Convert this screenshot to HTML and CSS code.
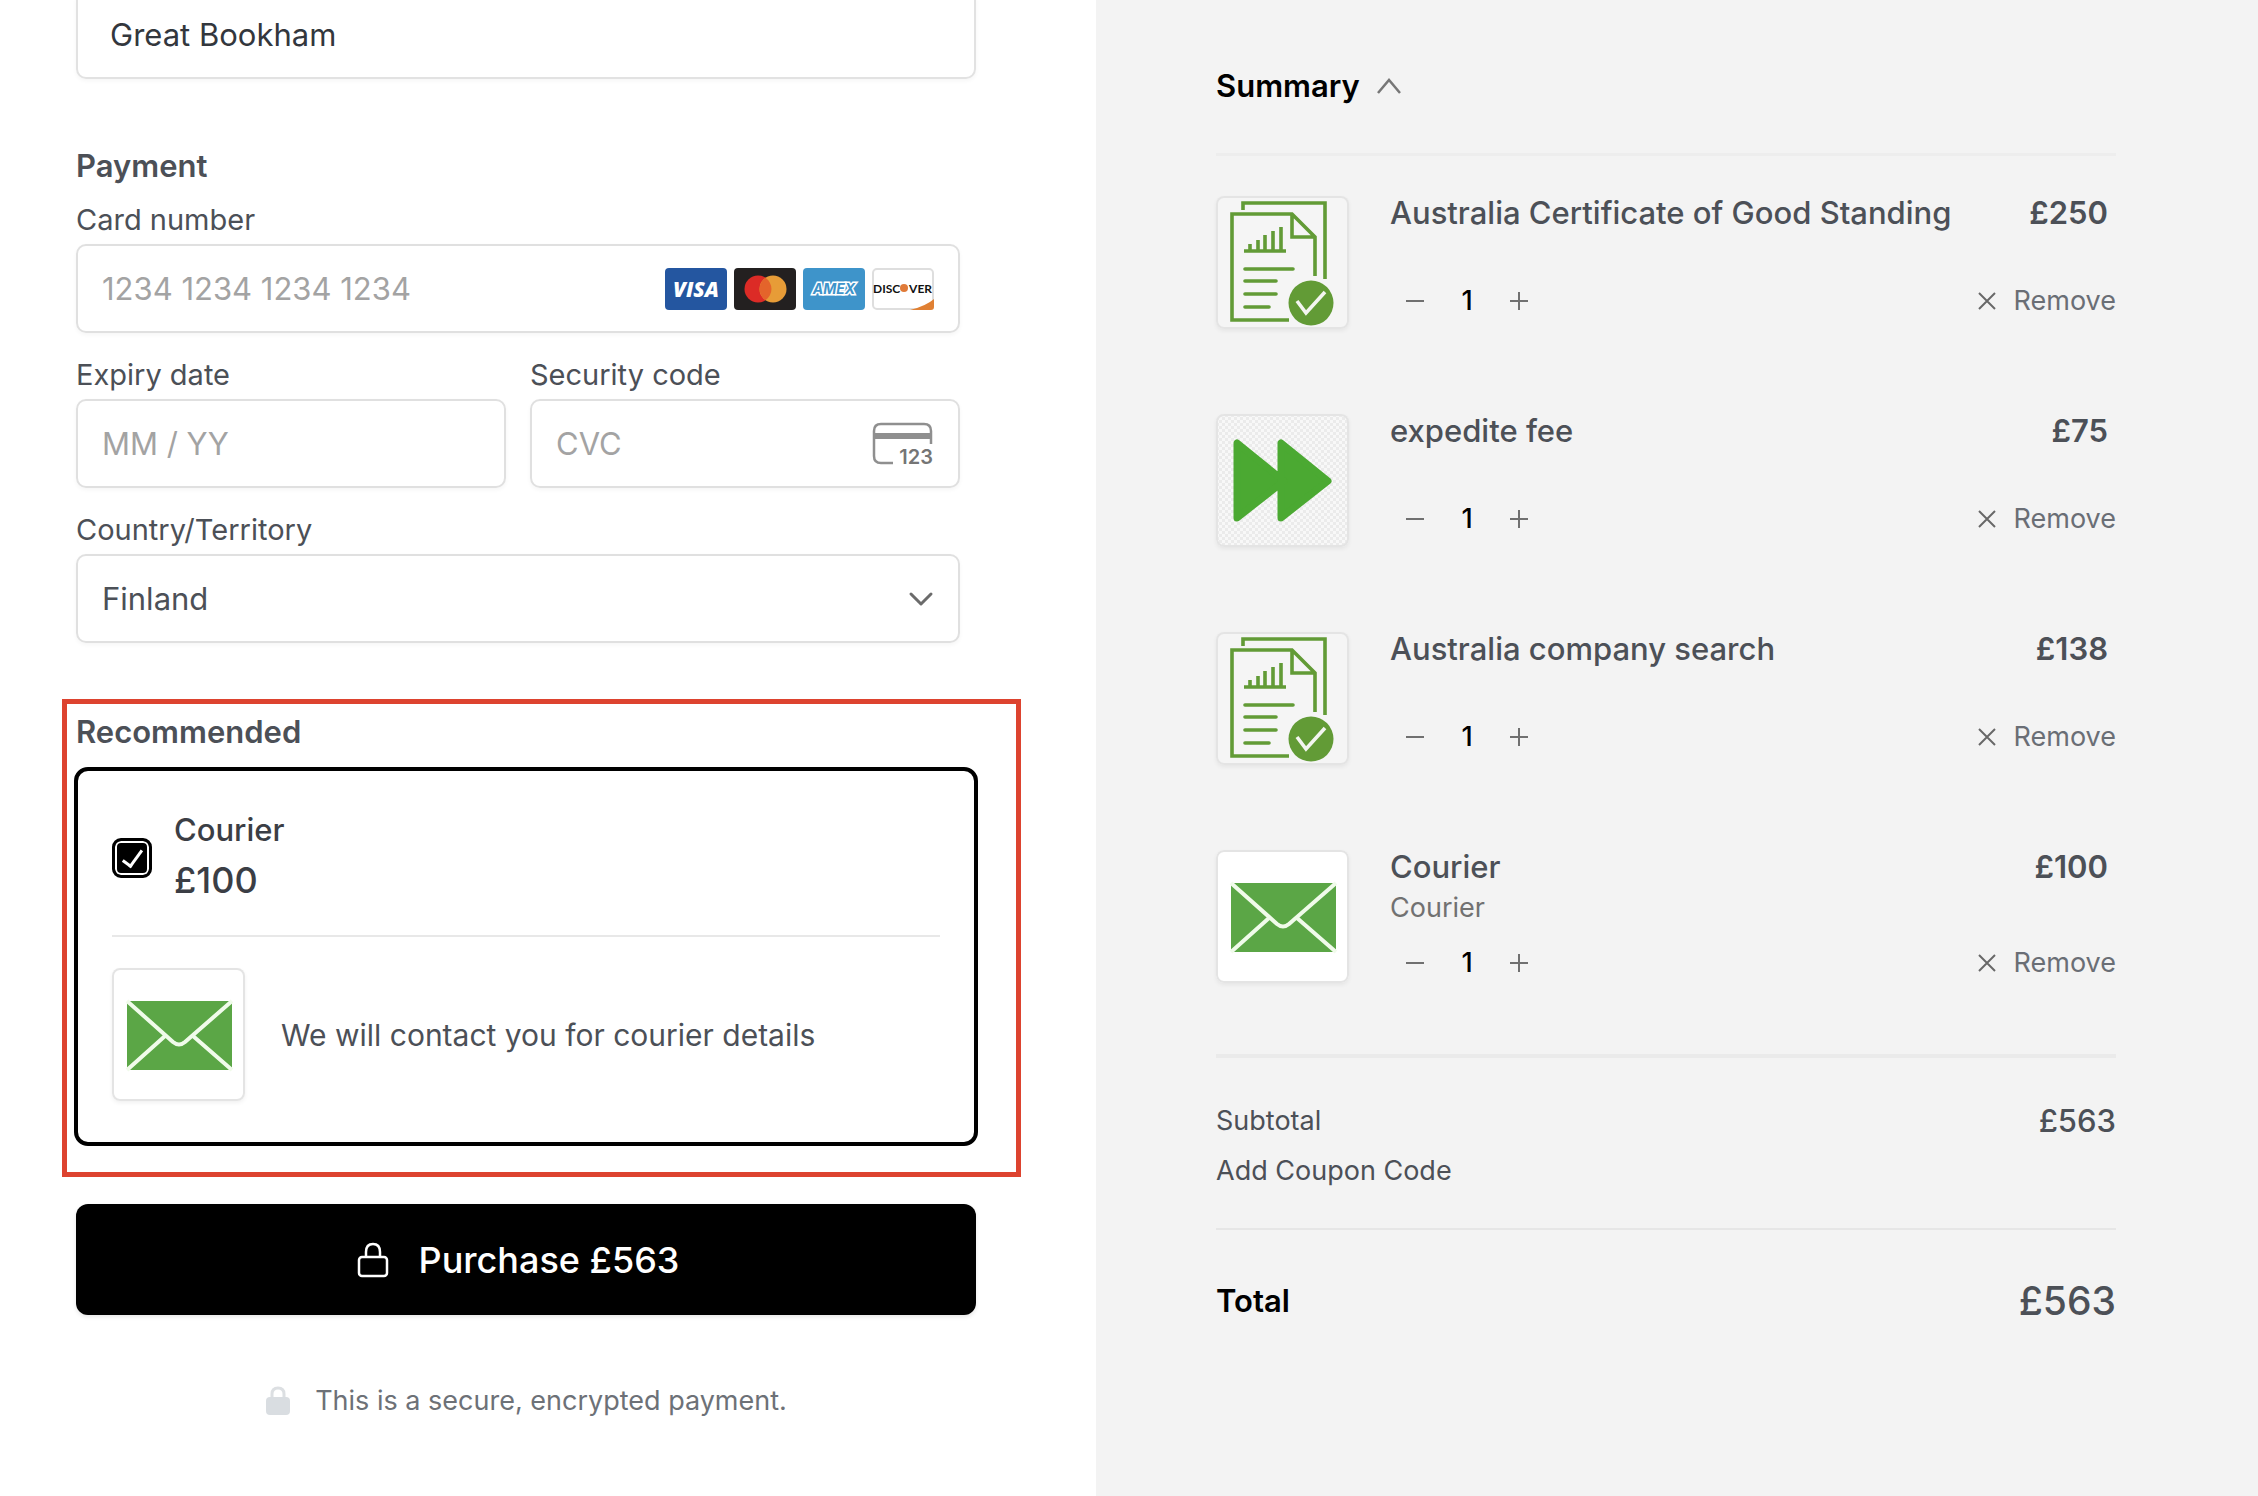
FILE: index.html
```html
<!DOCTYPE html>
<html lang="en">
<head>
    <meta charset="UTF-8">
    <meta name="viewport" content="width=device-width, initial-scale=1.0">
    <title>Checkout</title>
    <link rel="stylesheet" href="styles.css">
</head>
<body>
    <!-- Shared icons -->
    <svg class="sprite" aria-hidden="true">
        <symbol id="icon-envelope" viewBox="0 0 133 133">
            <rect x="15" y="33" width="105" height="69" fill="#5ba646"/>
            <g fill="none" stroke="#f0fbea" stroke-width="4">
                <path d="M15 33 L61 74 Q67 79 73 74 L120 33"/>
                <path d="M53 68 L15 102 M81 68 L120 102"/>
            </g>
        </symbol>
        <symbol id="icon-document" viewBox="0 0 133 133">
            <g fill="none" stroke="#629b36" stroke-width="3.6">
                <path d="M27 14 V7 H109 V83"/>
                <path d="M73 124 H16 V18 H76 L99 41 V80 M76 18 V41 H99"/>
                <path d="M28 55 H70 M34 55 V48 M42 55 V44 M49 55 V39 M57 55 V35 M65 55 V31"/>
                <path stroke-linecap="round" d="M29 73 H77 M29 85 H60 M29 98 H60 M29 111 H53"/>
            </g>
            <circle cx="95" cy="107" r="22.500" fill="#629b36"/>
            <path d="M81 105 L90 117 L109 96" fill="none" stroke="#f3f5f0" stroke-width="3.6"/>
        </symbol>
        <symbol id="icon-forward" viewBox="0 0 133 133">
            <path d="M21 29 V104 L68 67 Z M65 29 V104 L112 67 Z" fill="#4ba932" stroke="#4ba932" stroke-width="7" stroke-linejoin="round"/>
        </symbol>
        <symbol id="icon-minus" viewBox="0 0 18 18">
            <path d="M0 9 H18" stroke="#707070" stroke-width="2"/>
        </symbol>
        <symbol id="icon-plus" viewBox="0 0 18 18">
            <path d="M0 9 H18 M9 0 V18" stroke="#707070" stroke-width="2"/>
        </symbol>
        <symbol id="icon-close" viewBox="0 0 18 18">
            <path d="M1 1 L17 17 M17 1 L1 17" stroke="#686868" stroke-width="2"/>
        </symbol>
    </svg>

    <div class="page">
        <!-- Payment form -->
        <main class="checkout">
            <input class="city" type="text" value="Great Bookham" aria-label="City">

            <section class="payment">
                <h2>Payment</h2>
                <div class="field">
                    <label for="card-number">Card number</label>
                    <div class="control">
                        <input type="text" id="card-number" placeholder="1234 1234 1234 1234">
                        <div class="cards">
                            <svg viewBox="0 0 62 42"><rect width="62" height="42" rx="4" fill="#2456a0"/><text x="31" y="29" text-anchor="middle" class="visa">VISA</text></svg>
                            <svg viewBox="0 0 62 42"><rect width="62" height="42" rx="4" fill="#232020"/><circle cx="24" cy="21" r="13.500" fill="#dc2b26"/><circle cx="39" cy="21" r="13.500" fill="#e79c37"/><path d="M31.500 9.800 a13.500 13.500 0 0 1 0 22.400 a13.500 13.500 0 0 1 0 -22.400" fill="#e4642b"/></svg>
                            <svg viewBox="0 0 62 42"><rect width="62" height="42" rx="4" fill="#3e94ca"/><text x="31" y="26" text-anchor="middle" class="amex">AMEX</text></svg>
                            <svg viewBox="0 0 62 42"><rect x="1" y="1" width="60" height="40" rx="4" fill="#fff" stroke="#dedede" stroke-width="2"/><path d="M38 42 Q54 38 62 31 V39 Q62 42 59 42 Z" fill="#e08033"/><text x="1" y="25" class="discover">DISC</text><circle cx="32" cy="20" r="4" fill="#e07a38"/><text x="60" y="25" text-anchor="end" class="discover">VER</text></svg>
                        </div>
                    </div>
                </div>
                <div class="row">
                    <div class="field">
                        <label for="expiry">Expiry date</label>
                        <div class="control">
                            <input type="text" id="expiry" placeholder="MM / YY">
                        </div>
                    </div>
                    <div class="field">
                        <label for="cvc">Security code</label>
                        <div class="control">
                            <input type="text" id="cvc" placeholder="CVC">
                            <svg class="cvc-icon" viewBox="0 0 62 44">
                                <path d="M21 41 H9 Q2 41 2 34 V9 Q2 2 9 2 H52 Q59 2 59 9 V22" fill="none" stroke="#8f8f8f" stroke-width="2.500"/>
                                <rect x="2" y="11" width="57" height="6" fill="#8f8f8f"/>
                                <text x="61" y="42" text-anchor="end">123</text>
                            </svg>
                        </div>
                    </div>
                </div>
                <div class="field">
                    <label for="country">Country/Territory</label>
                    <div class="control">
                        <select id="country">
                            <option>Finland</option>
                        </select>
                        <svg class="chevron" viewBox="0 0 26 16"><path d="M3 3 L13 13 L23 3" fill="none" stroke="#6b6b6b" stroke-width="3" stroke-linecap="round" stroke-linejoin="round"/></svg>
                    </div>
                </div>
            </section>

            <!-- Recommended add-on -->
            <section class="recommended">
                <h2>Recommended</h2>
                <div class="addon">
                    <label class="addon-head">
                        <input type="checkbox" checked>
                        <span class="addon-text">
                            <span class="addon-name">Courier</span>
                            <span class="addon-price">£100</span>
                        </span>
                    </label>
                    <div class="addon-body">
                        <svg class="thumb thumb-white"><use href="#icon-envelope"/></svg>
                        <p>We will contact you for courier details</p>
                    </div>
                </div>
            </section>

            <button class="purchase" type="button">
                <svg viewBox="0 0 32 36"><path d="M9 15 V10 Q9 2 16 2 Q23 2 23 10 V15" fill="none" stroke="#fff" stroke-width="2.500"/><rect x="2" y="15" width="28" height="19" rx="3" fill="none" stroke="#fff" stroke-width="2.500"/></svg>
                Purchase £563
            </button>

            <p class="secure">
                <svg viewBox="0 0 26 30"><path d="M7 13 V8 Q7 2 13 2 Q19 2 19 8 V13" fill="none" stroke="#dcdfe2" stroke-width="3"/><rect x="1" y="11" width="24" height="18" rx="4" fill="#d9dde1"/></svg>
                This is a secure, encrypted payment.
            </p>
        </main>

        <!-- Order summary -->
        <aside class="summary">
            <h2 class="summary-title">
                <button type="button">
                    Summary
                    <svg viewBox="0 0 26 16"><path d="M2 15 L13 2 L24 15" fill="none" stroke="#777" stroke-width="2.500"/></svg>
                </button>
            </h2>

            <ul class="items">
                <li class="item">
                    <svg class="thumb"><use href="#icon-document"/></svg>
                    <div class="item-body">
                        <div class="item-top"><h3>Australia Certificate of Good Standing</h3><span class="price">£250</span></div>
                        <div class="item-meta"></div>
                        <div class="item-actions">
                            <button type="button" class="step" aria-label="Decrease"><svg><use href="#icon-minus"/></svg></button>
                            <input class="qty" type="text" value="1" aria-label="Quantity">
                            <button type="button" class="step" aria-label="Increase"><svg><use href="#icon-plus"/></svg></button>
                            <button type="button" class="remove"><svg><use href="#icon-close"/></svg>Remove</button>
                        </div>
                    </div>
                </li>
                <li class="item">
                    <svg class="thumb thumb-checker"><use href="#icon-forward"/></svg>
                    <div class="item-body">
                        <div class="item-top"><h3>expedite fee</h3><span class="price">£75</span></div>
                        <div class="item-meta"></div>
                        <div class="item-actions">
                            <button type="button" class="step" aria-label="Decrease"><svg><use href="#icon-minus"/></svg></button>
                            <input class="qty" type="text" value="1" aria-label="Quantity">
                            <button type="button" class="step" aria-label="Increase"><svg><use href="#icon-plus"/></svg></button>
                            <button type="button" class="remove"><svg><use href="#icon-close"/></svg>Remove</button>
                        </div>
                    </div>
                </li>
                <li class="item">
                    <svg class="thumb"><use href="#icon-document"/></svg>
                    <div class="item-body">
                        <div class="item-top"><h3>Australia company search</h3><span class="price">£138</span></div>
                        <div class="item-meta"></div>
                        <div class="item-actions">
                            <button type="button" class="step" aria-label="Decrease"><svg><use href="#icon-minus"/></svg></button>
                            <input class="qty" type="text" value="1" aria-label="Quantity">
                            <button type="button" class="step" aria-label="Increase"><svg><use href="#icon-plus"/></svg></button>
                            <button type="button" class="remove"><svg><use href="#icon-close"/></svg>Remove</button>
                        </div>
                    </div>
                </li>
                <li class="item">
                    <svg class="thumb thumb-white"><use href="#icon-envelope"/></svg>
                    <div class="item-body">
                        <div class="item-top"><h3>Courier</h3><span class="price">£100</span></div>
                        <div class="item-meta"><p>Courier</p></div>
                        <div class="item-actions">
                            <button type="button" class="step" aria-label="Decrease"><svg><use href="#icon-minus"/></svg></button>
                            <input class="qty" type="text" value="1" aria-label="Quantity">
                            <button type="button" class="step" aria-label="Increase"><svg><use href="#icon-plus"/></svg></button>
                            <button type="button" class="remove"><svg><use href="#icon-close"/></svg>Remove</button>
                        </div>
                    </div>
                </li>
            </ul>

            <div class="totals">
                <div class="line"><span>Subtotal</span><span class="amount">£563</span></div>
                <a class="coupon" href="#">Add Coupon Code</a>
            </div>
            <div class="line total"><span>Total</span><span class="amount">£563</span></div>
        </aside>
    </div>
</body>
</html>
```
FILE: styles.css
```css
* {
    box-sizing: border-box;
}

body {
    margin: 0;
    font-family: Inter, "Liberation Sans", sans-serif;
    font-size: 31px;
    line-height: 40px;
    color: #4c5057;
    background-color: #fff;
}

h2, h3, p, ul {
    margin: 0;
    padding: 0;
}

h2 {
    font-size: 31px;
    font-weight: 600;
}

input, select, button {
    font: inherit;
    color: inherit;
    margin: 0;
    padding: 0;
    border: none;
    background: none;
}

button {
    cursor: pointer;
}

svg {
    display: block;
    flex: none;
    overflow: visible;
}

.sprite {
    position: absolute;
    width: 0;
    height: 0;
}

.page {
    display: grid;
    grid-template-columns: minmax(0, 1096fr) minmax(0, 1162fr);
    min-height: 100vh;
}

/* Left side */
.checkout {
    padding: 0 120px 0 76px;
}

/* the address block runs off the top edge */
.city {
    display: block;
    width: 100%;
    height: 89px;
    margin-top: -10px;
    padding: 0 32px;
    color: #33373d;
    border: 2px solid #e2e2e2;
    border-radius: 10px;
    box-shadow: 0 2px 4px rgba(0, 0, 0, 0.04);
}

.payment {
    margin: 67px 16px 0 0;
}

.payment h2 {
    margin-bottom: 14px;
}

.field {
    flex: 1;
    min-width: 0;
    margin-bottom: 22px;
}

.field label {
    display: block;
    margin-bottom: 4px;
    font-size: 29px;
}

.row {
    display: flex;
    gap: 24px;
}

.control {
    position: relative;
    display: flex;
    align-items: center;
    height: 89px;
    padding: 0 24px;
    border: 2px solid #e0e0e0;
    border-radius: 10px;
    box-shadow: 0 2px 4px rgba(0, 0, 0, 0.04);
}

.control input,
.control select {
    flex: 1;
    min-width: 0;
    height: 100%;
    outline: none;
    appearance: none;
}

.control ::placeholder {
    color: #a3a3a3;
    opacity: 1;
}

.chevron {
    position: absolute;
    right: 24px;
    width: 26px;
    height: 16px;
    pointer-events: none;
}

.cards {
    display: flex;
    gap: 7px;
}

.cards svg {
    width: 62px;
    height: 42px;
}

.visa {
    font: italic 800 21px "Open Sans", sans-serif;
    fill: #fff;
}

.amex {
    font: italic 700 14px Inter, sans-serif;
    fill: #3e94ca;
    stroke: #fff;
    stroke-width: 3px;
    paint-order: stroke;
}

.discover {
    font: 700 12px Lato, sans-serif;
    fill: #111;
}

.cvc-icon {
    width: 62px;
    height: 44px;
}

.cvc-icon text {
    font: 600 20px Inter, sans-serif;
    fill: #757575;
}

/* Recommended add-on */
.recommended {
    margin: 56px -45px 27px -14px;
    padding: 8px 38px 26px 7px;
    border: 5px solid #dd432f;
}

.recommended h2 {
    margin: 0 0 15px 2px;
}

.addon {
    padding: 34px 34px 41px;
    border: 4px solid #000;
    border-radius: 14px;
}

.addon-head {
    display: flex;
    align-items: flex-start;
    gap: 22px;
    padding-bottom: 30px;
    border-bottom: 2px solid #e8e8e8;
    color: #3b3e45;
}

.addon-head input {
    width: 40px;
    height: 40px;
    margin-top: 33px;
    appearance: none;
    border: 3px solid #000;
    border-radius: 9px;
    background-color: #000;
    box-shadow: inset 0 0 0 2px #fff;
    display: grid;
    place-items: center;
}

/* tick mark */
.addon-head input:checked::after {
    content: "";
    width: 8px;
    height: 18px;
    margin-bottom: 4px;
    border: solid #fff;
    border-width: 0 3px 3px 0;
    transform: rotate(36deg);
}

.addon-text {
    display: flex;
    flex-direction: column;
    line-height: 50px;
    font-weight: 500;
}

.addon-price {
    font-size: 36px;
}

.addon-body {
    display: flex;
    align-items: center;
    gap: 36px;
    padding-top: 31px;
    font-size: 30px;
}

.thumb {
    width: 133px;
    height: 133px;
    border-radius: 8px;
    background-color: #f5f5f5;
    box-shadow: inset 0 0 0 2px #e4e4e4, 0 2px 4px rgba(0, 0, 0, 0.06);
}

.thumb-white {
    background-color: #fff;
}

.thumb-checker {
    background: repeating-conic-gradient(#ebebeb 0% 25%, #f8f8f8 0% 50%) 0 0 / 6px 6px;
}

.purchase {
    display: flex;
    align-items: center;
    justify-content: center;
    gap: 30px;
    width: 100%;
    height: 111px;
    padding-right: 16px;
    color: #fff;
    background-color: #000;
    border-radius: 12px;
    font-size: 36px;
    font-weight: 500;
    box-shadow: 0 2px 4px rgba(0, 0, 0, 0.1);
}

.purchase svg {
    width: 32px;
    height: 36px;
}

.secure {
    display: flex;
    align-items: center;
    justify-content: center;
    gap: 24px;
    margin-top: 66px;
    font-size: 27px;
    color: #6d7177;
}

.secure svg {
    width: 26px;
    height: 30px;
}

/* Right side */
.summary {
    padding: 66px 142px 0 120px;
    background-color: #f3f3f3;
}

.summary-title {
    padding-bottom: 47px;
    border-bottom: 3px solid #ededed;
    color: #000;
}

.summary-title button {
    display: flex;
    align-items: center;
    gap: 16px;
}

.summary-title svg {
    width: 26px;
    height: 16px;
}

.items {
    display: flex;
    flex-direction: column;
    gap: 85px;
    padding: 40px 0 71px;
    border-bottom: 4px solid #eaeaea;
    list-style: none;
}

.item {
    display: flex;
    gap: 41px;
}

.item-body {
    flex: 1;
    min-width: 0;
    padding-top: 1px;
}

.item-top {
    display: flex;
    justify-content: space-between;
    padding-right: 8px;
    line-height: 32px;
}

.item-top h3 {
    font-size: 31px;
    font-weight: 500;
}

.price {
    font-weight: 600;
}

.item-meta {
    min-height: 52px;
    font-size: 27px;
    color: #717171;
}

.item-meta p {
    padding: 5px 0 15px;
}

.item-actions {
    display: flex;
    align-items: center;
    font-size: 27px;
}

.step {
    display: grid;
    place-items: center;
    width: 50px;
    height: 40px;
}

.step svg,
.remove svg {
    width: 18px;
    height: 18px;
}

.qty {
    width: 54px;
    height: 40px;
    text-align: center;
    color: #000;
    font-weight: 500;
}

.remove {
    display: flex;
    align-items: center;
    gap: 18px;
    margin-left: auto;
    color: #6a6e75;
}

.totals {
    padding: 43px 0 37px;
    border-bottom: 2px solid #e6e6e6;
    font-size: 27px;
}

.line {
    display: flex;
    align-items: center;
    justify-content: space-between;
}

.line .amount {
    font-size: 31px;
    font-weight: 500;
}

.coupon {
    display: block;
    margin-top: 10px;
    color: inherit;
    text-decoration: none;
}

.total {
    padding-top: 47px;
    line-height: 48px;
    font-weight: 600;
    color: #000;
}

.total .amount {
    font-size: 39px;
    color: #4c5057;
}
```
